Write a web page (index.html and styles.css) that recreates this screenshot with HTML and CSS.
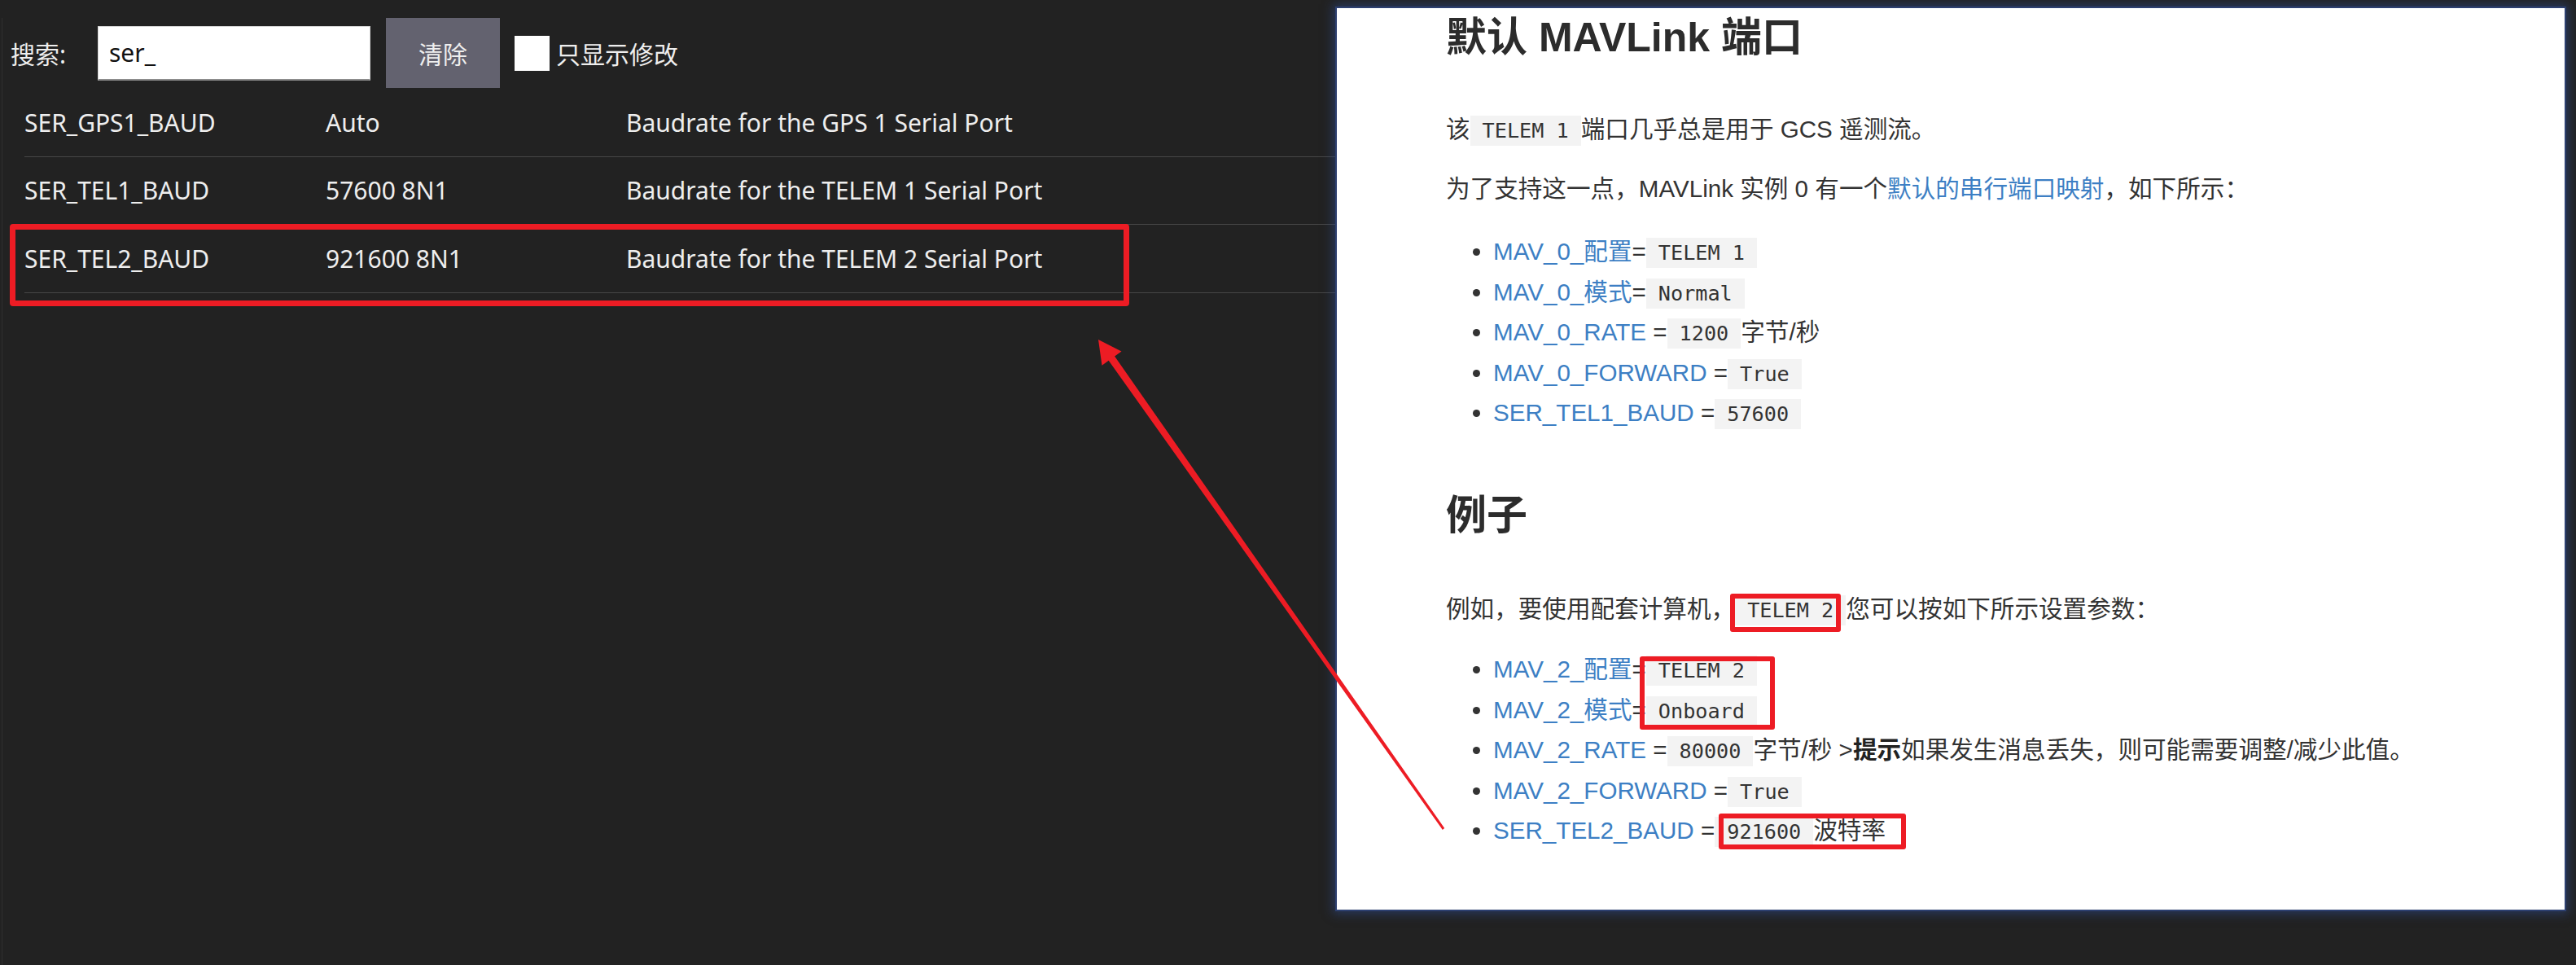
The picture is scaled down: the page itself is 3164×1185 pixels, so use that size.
FILE: index.html
```html
<!DOCTYPE html>
<html lang="zh-CN">
<head>
<meta charset="utf-8">
<title>参数</title>
<link rel="stylesheet" href="styles.css">
</head>
<body>
<div class="app">
  <div class="toolbar">
    <span class="search-label">搜索:</span>
    <input class="search" type="text" value="ser_">
    <button class="clear">清除</button>
    <input class="check" type="checkbox">
    <span class="check-label">只显示修改</span>
  </div>
  <div class="table">
    <div class="row"><span>SER_GPS1_BAUD</span><span>Auto</span><span>Baudrate for the GPS 1 Serial Port</span></div>
    <div class="row"><span>SER_TEL1_BAUD</span><span>57600 8N1</span><span>Baudrate for the TELEM 1 Serial Port</span></div>
    <div class="row"><span>SER_TEL2_BAUD</span><span>921600 8N1</span><span>Baudrate for the TELEM 2 Serial Port</span></div>
  </div>
</div>
<div class="doc">
  <h2 class="h-first">默认 MAVLink 端口</h2>
  <p class="p1">该<code>TELEM 1</code>端口几乎总是用于 GCS 遥测流。</p>
  <p class="p2">为了支持这一点，MAVLink 实例 0 有一个<a href="#">默认的串行端口映射</a>，如下所示：</p>
  <ul class="ul1">
    <li><a href="#">MAV_0_配置</a>=<code>TELEM 1</code></li>
    <li><a href="#">MAV_0_模式</a>=<code>Normal</code></li>
    <li><a href="#">MAV_0_RATE</a> =<code>1200</code>字节/秒</li>
    <li><a href="#">MAV_0_FORWARD</a> =<code>True</code></li>
    <li><a href="#">SER_TEL1_BAUD</a> =<code>57600</code></li>
  </ul>
  <h2 class="h-example">例子</h2>
  <p class="p3">例如，要使用配套计算机，<code>TELEM 2</code>您可以按如下所示设置参数：</p>
  <ul class="ul2">
    <li><a href="#">MAV_2_配置</a>=<code>TELEM 2</code></li>
    <li><a href="#">MAV_2_模式</a>=<code>Onboard</code></li>
    <li><a href="#">MAV_2_RATE</a> =<code>80000</code>字节/秒 &gt;<strong>提示</strong>如果发生消息丢失，则可能需要调整/减少此值。</li>
    <li><a href="#">MAV_2_FORWARD</a> =<code>True</code></li>
    <li><a href="#">SER_TEL2_BAUD</a> =<code>921600</code>波特率</li>
  </ul>
</div>
<div class="mark mark-row"></div>
<div class="mark mark-telem"></div>
<div class="mark mark-list"></div>
<div class="mark mark-baud"></div>
<svg class="arrow" width="3164" height="1185" viewBox="0 0 3164 1185">
  <polygon fill="#ed1c24" points="1349,417 1377.5,431.6 1369.1,437.6 1774.2,1017.1 1771.8,1018.9 1361.7,442.8 1353.5,448.8"/>
</svg>
</body>
</html>
```

FILE: styles.css
```css
html, body {
  margin: 0;
  padding: 0;
}

body {
  position: relative;
  width: 3164px;
  height: 1185px;
  overflow: hidden;
  background: #222222;
  display: flex;
  align-items: flex-start;
}

/* ---------- left: parameter app ---------- */
.app {
  flex: none;
  width: 1639px;
  height: 1163px;
  margin-left: 2px;
  margin-top: 22px;
  border-left: 1px solid #2f2f2f;
  font-family: "Noto Sans", "Noto Sans CJK SC", sans-serif;
  font-size: 30px;
  color: #eeeeee;
}

.toolbar {
  display: flex;
  align-items: center;
  height: 86px;
  padding-left: 10px;
}

.search-label {
  flex: none;
  width: 107px;
}

.search {
  flex: none;
  width: 335px;
  height: 67px;
  box-sizing: border-box;
  margin: 0 19px 0 0;
  padding: 0 13px;
  border: 1px solid #d4d4d4;
  border-bottom: 2px solid #8c8c8c;
  background: #ffffff;
  color: #111111;
  font-family: "Noto Sans", sans-serif;
  font-size: 30px;
  outline: none;
}

.clear {
  flex: none;
  width: 140px;
  height: 86px;
  margin: 0 18px 0 0;
  padding: 0;
  border: 0;
  background: #63626f;
  color: #eeeeee;
  font-family: "Noto Sans", "Noto Sans CJK SC", sans-serif;
  font-size: 30px;
}

.check {
  flex: none;
  -webkit-appearance: none;
  appearance: none;
  width: 43px;
  height: 43px;
  margin: 0 8px 0 0;
  border: 0;
  border-radius: 0;
  background: #ffffff;
}

.table {
  margin-left: 27px;
  padding-top: 1px;
}

.row {
  display: grid;
  grid-template-columns: 370px 369px 1fr;
  align-items: center;
  height: 82.5px;
  border-bottom: 1px solid #474747;
  white-space: nowrap;
}

/* ---------- right: documentation panel ---------- */
.doc {
  flex: none;
  width: 1508px;
  height: 1107px;
  margin-top: 10px;
  box-sizing: border-box;
  padding: 6px 0 0 134px;
  overflow: hidden;
  background: #ffffff;
  box-shadow: 0 0 0 2px #2d4070, 0 0 12px 5px rgba(45, 75, 140, 0.55);
  font-family: "Liberation Sans", "Noto Sans CJK SC", sans-serif;
  font-size: 29.6px;
  line-height: 49.4px;
  color: #333333;
}

.doc h2 {
  margin: 0;
  font-size: 50px;
  line-height: 60px;
  font-weight: 700;
  color: #2c2c2c;
}

.doc .h-example {
  margin-top: 72px;
}

.doc p {
  margin: 0;
}

.doc .p1 { margin-top: 58px; }
.doc .p2 { margin-top: 24px; }
.doc .p3 { margin-top: 60px; }

.doc ul {
  margin: 0;
  padding-left: 58px;
}

.doc .ul1 { margin-top: 27.5px; }
.doc .ul2 { margin-top: 24.6px; }

.doc a {
  color: #3d7fc4;
  text-decoration: none;
}

.doc strong {
  font-weight: 700;
  color: #222222;
}

.doc code {
  font-family: "DejaVu Sans Mono", monospace;
  font-size: 25.2px;
  line-height: 1;
  padding: 4px 15px;
  background: #f3f3f3;
  color: #333333;
}

/* ---------- annotations ---------- */
.mark {
  position: absolute;
  box-sizing: border-box;
  border: 6px solid #ed1c24;
  border-radius: 3px;
}

.mark-row {
  left: 12px;
  top: 275px;
  width: 1375px;
  height: 101px;
  border-width: 7px;
  border-radius: 4px;
}

.mark-telem {
  left: 2125px;
  top: 729px;
  width: 136px;
  height: 47px;
}

.mark-list {
  left: 2014px;
  top: 806px;
  width: 166px;
  height: 90px;
}

.mark-baud {
  left: 2111px;
  top: 999px;
  width: 230px;
  height: 44px;
}

.arrow {
  position: absolute;
  left: 0;
  top: 0;
  pointer-events: none;
}
```
